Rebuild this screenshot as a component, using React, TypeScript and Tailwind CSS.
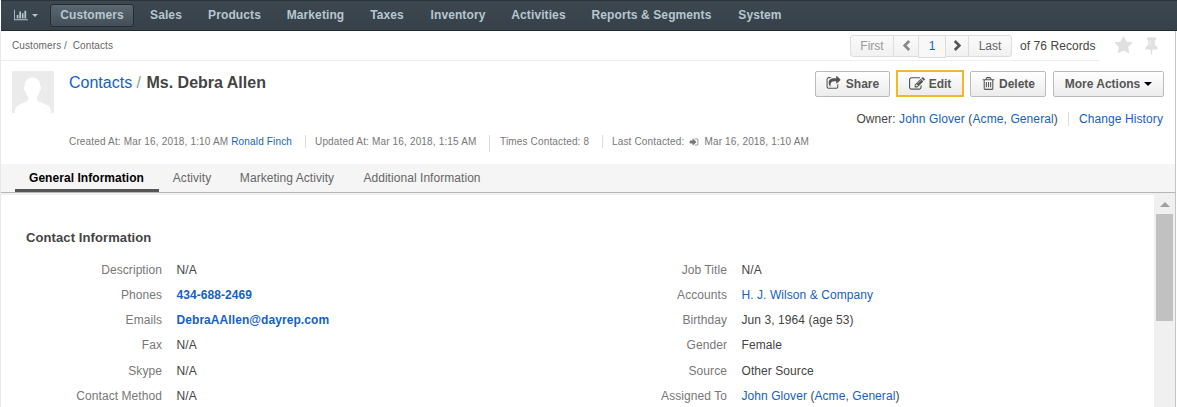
import React from "react";

const ICONS = {
  chart: "M640 896v512h-256v-512h256zm384-512v1024h-256v-1024h256zm1024 1152v128h-2048v-1536h128v1408h1920zm-640-896v768h-256v-768h256zm384-384v1152h-256v-1152h256z",
  star: "M1728 647q0 22-26 48l-363 354 86 500q1 7 1 20 0 21-10.500 35.500t-30.500 14.500q-19 0-40-12l-449-236-449 236q-22 12-40 12-21 0-31.500-14.500t-10.500-35.500q0-6 2-20l86-500-364-354q-25-27-25-48 0-37 56-46l502-73 225-455q19-41 49-41t49 41l225 455 502 73q56 9 56 46z",
  pin: "M800 864v-448q0-14-9-23t-23-9-23 9-9 23v448q0 14 9 23t23 9 23-9 9-23zm672 352q0 26-19 45t-45 19h-429l-51 483q-2 12-10.500 20.500t-20.500 8.500h-1q-27 0-32-27l-76-485h-404q-26 0-45-19t-19-45q0-123 78.500-221.500t177.500-98.500v-512q-52 0-90-38t-38-90 38-90 90-38h640q52 0 90 38t38 90-38 90-90 38v512q99 0 177.500 98.500t78.500 221.500z",
  signIn: "M1312 896q0 26-19 45l-544 544q-19 19-45 19t-45-19-19-45v-288h-448q-26 0-45-19t-19-45v-384q0-26 19-45t45-19h448v-288q0-26 19-45t45-19 45 19l544 544q19 19 19 45zm352-352v704q0 119-84.500 203.500t-203.500 84.500h-320q-13 0-22.500-9.500t-9.500-22.500q0-4-1-20t-.5-26.500 3-23.500 10-19.500 20.500-6.500h320q66 0 113-47t47-113v-704q0-66-47-113t-113-47h-312l-11.500-1-11.500-3-8-5.500-7-9-2-13.500q0-4-1-20t-.5-26.500 3-23.500 10-19.500 20.500-6.500h320q119 0 203.500 84.500t84.500 203.500z",
  edit: "M888 1184l116-116-152-152-116 116v56h96v96h56zm440-720q-16-16-33 1l-350 350q-17 17-1 33t33-1l350-350q17-17 1-33zm80 594v190q0 119-84.500 203.500t-203.500 84.500h-832q-119 0-203.500-84.500t-84.500-203.500v-832q0-119 84.500-203.500t203.500-84.500h832q63 0 117 25 15 7 18 23 3 17-9 29l-49 49q-14 14-32 8-23-6-45-6h-832q-66 0-113 47t-47 113v832q0 66 47 113t113 47h832q66 0 113-47t47-113v-126q0-13 9-22l64-64q15-15 35-7t20 29zm-96-738l288 288-672 672h-288v-288zm444 132l-92 92-288-288 92-92q28-28 68-28t68 28l152 152q28 28 28 68t-28 68z",
  trash: "M704 736v576q0 14-9 23t-23 9h-64q-14 0-23-9t-9-23v-576q0-14 9-23t23-9h64q14 0 23 9t9 23zm256 0v576q0 14-9 23t-23 9h-64q-14 0-23-9t-9-23v-576q0-14 9-23t23-9h64q14 0 23 9t9 23zm256 0v576q0 14-9 23t-23 9h-64q-14 0-23-9t-9-23v-576q0-14 9-23t23-9h64q14 0 23 9t9 23zm128 724v-948h-896v948q0 22 7 40.500t14.500 27 10.500 8.500h832q3 0 10.500-8.500t14.500-27 7-40.500zm-672-1076h448l-48-117q-7-9-17-11h-317q-10 2-17 11zm928 32v64q0 14-9 23t-23 9h-96v948q0 83-47 143.500t-113 60.500h-832q-66 0-113-58.500t-47-141.500v-952h-96q-14 0-23-9t-9-23v-64q0-14 9-23t23-9h309l70-167q15-37 54-63t79-26h320q40 0 79 26t54 63l70 167h309q14 0 23 9t9 23z",
  share: "M1472 989v259q0 119-84.500 203.500t-203.500 84.500h-832q-119 0-203.500-84.500t-84.500-203.500v-832q0-119 84.500-203.500t203.500-84.500h255q13 0 22.500 9.500t9.500 22.500q0 27-26 32-77 26-133 60-10 4-16 4h-112q-66 0-113 47t-47 113v832q0 66 47 113t113 47h832q66 0 113-47t47-113v-214q0-19 18-29 28-13 54-37 16-16 35-8 21 9 21 31zm237-496l-384 384q-18 19-45 19-12 0-25-5-39-17-39-59v-192h-160q-323 0-438 131-119 137-74 473 3 23-20 34-8 2-12 2-16 0-26-13-10-14-21-31t-39.500-68.500-49.500-99.500-38.500-114-17.500-122q0-49 3.500-91t14-90 28-88 47-81.500 68.500-74 94.500-61.500 124.500-48.500 159.500-30.500 196.500-11h160v-192q0-42 39-59 13-5 25-5 26 0 45 19l384 384q19 19 19 45t-19 45z",
};

function Icon({ name, className, box = "0 0 1792 1792" }: { name: keyof typeof ICONS; className: string; box?: string }) {
  return (
    <svg viewBox={box} className={className} fill="currentColor" aria-hidden="true">
      <path d={ICONS[name]} />
    </svg>
  );
}

function Chevron({ flip, className }: { flip?: boolean; className: string }) {
  return (
    <svg viewBox="0 0 10 12" className={className} fill="none" stroke="currentColor" strokeWidth="3" aria-hidden="true">
      <path d={flip ? "M2 1l5 5-5 5" : "M8 1L3 6l5 5"} />
    </svg>
  );
}

const NAV = [
  { label: "Sales", cls: "w-[58px]" },
  { label: "Products", cls: "w-[79px]" },
  { label: "Marketing", cls: "w-[83px]" },
  { label: "Taxes", cls: "w-[60px]" },
  { label: "Inventory", cls: "w-[82px]" },
  { label: "Activities", cls: "w-[79px]" },
  { label: "Reports & Segments", cls: "w-[147px]" },
  { label: "System", cls: "w-[70px]" },
];

const LINK = "text-[#1461c5]";

const LEFT: [string, string, string][] = [
  ["Description", "N/A", ""],
  ["Phones", "434-688-2469", "font-bold text-[#1461c5]"],
  ["Emails", "DebraAAllen@dayrep.com", "font-bold text-[#1461c5]"],
  ["Fax", "N/A", ""],
  ["Skype", "N/A", ""],
  ["Contact Method", "N/A", ""],
];

const RIGHT: [string, React.ReactNode, string][] = [
  ["Job Title", "N/A", ""],
  ["Accounts", "H. J. Wilson & Company", LINK],
  ["Birthday", "Jun 3, 1964 (age 53)", ""],
  ["Gender", "Female", ""],
  ["Source", "Other Source", ""],
  ["Assigned To", <OwnerLink key="owner" />, ""],
];

function OwnerLink() {
  return (
    <>
      <a className={LINK}>John Glover</a> (<a className={LINK}>Acme, General</a>)
    </>
  );
}

function Fields({ rows, label }: { rows: [string, React.ReactNode, string][]; label: string }) {
  return (
    <dl className="flex flex-col tracking-[0.07px]">
      {rows.map(([name, value, cls]) => (
        <div key={name} className="flex h-[25.2px] items-center gap-[14.5px] whitespace-nowrap leading-[18px]">
          <dt className={`${label} text-right text-[#777]`}>{name}</dt>
          <dd className={cls}>{value}</dd>
        </div>
      ))}
    </dl>
  );
}

const BTN =
  "flex items-center justify-center border bg-linear-to-b from-white to-[#ececec] text-[12px] font-bold text-[#555]";
const PLAIN = "h-[26px] rounded-[2px] border-[#bbb]";
const PAGER = "flex h-[22px] items-center justify-center border-[#ddd] bg-linear-to-b from-[#fbfbfb] to-[#f1f1f1]";

export default function App() {
  return (
    <div className="flex h-[407px] w-[1177px] flex-col overflow-hidden bg-white font-['Liberation_Sans',Arial,sans-serif] text-[12px] text-[#444]">
      <header className="ml-px flex h-[31px] shrink-0 items-center border-t border-b border-t-[#2b333b] border-b-[#222b35] bg-linear-to-b from-[#3d474f] to-[#37414a] pb-px pl-[13px] text-[12px] font-bold whitespace-nowrap text-[#b5c7d0]">
        <Icon name="chart" box="0 0 2048 1792" className="h-[12px] w-[14px]" />
        <span className="ml-[4px] h-0 w-0 border-x-[3px] border-t-[3px] border-x-transparent border-t-current" />
        <span className="ml-[12px] flex h-[23px] w-[84px] items-center justify-center rounded-[3px] border border-[#252c33] bg-linear-to-b from-[#5b6671] to-[#444e58] pb-px tracking-[0.1px]">Customers</span>
        <nav className="ml-[3px] flex tracking-[0.1px]">
          {NAV.map((item) => (
            <a key={item.label} className={`${item.cls} text-center`}>{item.label}</a>
          ))}
        </nav>
      </header>

      <div className="flex min-h-0 flex-1 border-l border-[#e8e8e8]">
        <main className="flex w-[1175px] shrink-0 flex-col border-r border-[#c4c4c4]">
          <div className="flex h-[30px] shrink-0 items-start">
            <div className="flex h-[30px] w-[1099px] items-center border-b border-[#eee]">
              <div className="w-[849px] pl-[11px] text-[10px] tracking-[0.1px] text-[#666]">Customers /&nbsp; Contacts</div>
              <div className="flex h-[22px] text-[12px] text-[#666]">
                <span className={`${PAGER} w-[44px] rounded-l-[3px] border text-[#999]`}>First</span>
                <span className={`${PAGER} w-[24px] border-y text-[#888]`}><Chevron className="h-[11px] w-[9px]" /></span>
                <span className={`flex h-[23px] w-[28px] items-center justify-center border border-[#ddd] bg-[#f8f8f8] pb-px ${LINK}`}>1</span>
                <span className={`${PAGER} w-[22px] border-y text-[#555]`}><Chevron flip className="h-[11px] w-[9px]" /></span>
                <span className={`${PAGER} w-[44px] rounded-r-[3px] border`}>Last</span>
              </div>
              <span className="ml-[8px] whitespace-nowrap tracking-[0.07px] text-[#444]">of 76 Records</span>
            </div>
            <div className="flex h-[28px] items-center pl-[14px] text-[#e0e0e0]">
              <Icon name="star" className="h-[19px] w-[19px]" />
              <Icon name="pin" className="ml-[9px] h-[19px] w-[19px]" />
            </div>
          </div>

          <div className="flex h-[69px] shrink-0 justify-between pr-[12px] pl-[11px]">
            <div className="flex pt-[10px]">
              <svg viewBox="0 0 42 42" className="h-[42px] w-[42px]" aria-hidden="true">
                <rect width="42" height="42" rx="1" fill="#ebebeb" />
                <path fill="#fff" d="M20.500 6.500c5 0 8 3.500 7.800 9 1.200.3 1 3.500-.6 4.500-.6 2.800-1.500 4.500-2.700 5.600v3.200c0 2 9 4 12 6.500 1.700 1.500 2 4 2 6.700H3c0-2.700.3-5.200 2-6.700 3-2.500 11-4.500 11-6.500v-3.200c-1.200-1.100-2.100-2.800-2.700-5.600-1.600-1-1.800-4.200-.6-4.500-.2-5.500 2.800-9 7.800-9z" />
              </svg>
              <h1 className="ml-[15px] pt-[1px] text-[16px] leading-[22px] whitespace-nowrap text-[#999]">
                <a className={LINK}>Contacts</a> / <b className="ml-px text-[#444]">Ms. Debra Allen</b>
              </h1>
            </div>
            <div className="flex flex-col items-end pt-[9px]">
              <div className="-mr-px flex h-[27px] items-center">
                <button className={`${BTN} ${PLAIN} w-[75px] gap-[5px]`}><Icon name="share" className="h-[15px] w-[15px]" />Share</button>
                <button className={`${BTN} ml-[6px] h-[27px] w-[68px] gap-[4px] border-2 border-[#f3b924]`}><Icon name="edit" className="mt-px h-[16px] w-[16px]" />Edit</button>
                <button className={`${BTN} ${PLAIN} ml-[6px] w-[76px] gap-[3px]`}><Icon name="trash" className="h-[15px] w-[15px]" />Delete</button>
                <button className={`${BTN} ${PLAIN} ml-[7px] w-[111px] gap-[4px]`}>More Actions<span className="h-0 w-0 border-x-4 border-t-4 border-x-transparent border-t-black" /></button>
              </div>
              <div className="mt-[13px] flex items-center tracking-[0.1px] whitespace-nowrap">
                <span>Owner: <OwnerLink /></span>
                <a className={`ml-[10px] border-l border-[#ddd] pl-[10px] leading-[14px] ${LINK}`}>Change History</a>
              </div>
            </div>
          </div>

          <div className="flex h-[34px] shrink-0 items-start pt-[5px] pl-[68px] text-[10px] leading-[13px] tracking-[0.16px] whitespace-nowrap text-[#777]">
            <span className="w-[236px]">Created At: Mar 16, 2018, 1:10 AM <a className={LINK}>Ronald Finch</a></span>
            <span className="h-[17px] w-[185px] border-x border-[#ddd] border-l-transparent bg-[linear-gradient(#ddd,#ddd)] bg-[length:1px_13px] bg-no-repeat bg-origin-border pl-[9px]">Updated At: Mar 16, 2018, 1:15 AM</span>
            <span className="w-[112px] pl-[10px]">Times Contacted: 8</span>
            <span className="flex items-center border-l border-[#ddd] pl-[9px]">Last Contacted:<Icon name="signIn" className="mr-[5px] ml-[5px] h-[10px] w-[10px]" />Mar 16, 2018, 1:10 AM</span>
          </div>

          <div className="flex h-[29px] shrink-0 border-b border-[#b5b5b5] bg-[#f5f5f5] pl-[14px] tracking-[0.05px] whitespace-nowrap text-[#666]">
            <a className="flex w-[144px] items-center justify-center border-b-[3px] border-[#555] pt-[2px] pr-px font-bold text-black">General Information</a>
            <a className="flex w-[66px] items-center justify-center pb-px">Activity</a>
            <a className="flex w-[124px] items-center justify-center pb-px">Marketing Activity</a>
            <a className="flex w-[146px] items-center justify-center pb-px">Additional Information</a>
          </div>

          <div className="flex min-h-0 flex-1">
            <section className="flex w-[1153px] shrink-0 flex-col border-t-2 border-[#f0f0f0] pt-[34px]">
              <h2 className="pl-[25px] text-[13px] leading-[18px] font-bold tracking-[0.1px]">Contact Information</h2>
              <div className="flex pt-[10.2px]">
                <div className="w-[565px]"><Fields rows={LEFT} label="w-[161px]" /></div>
                <Fields rows={RIGHT} label="w-[161px]" />
              </div>
            </section>
            <div className="flex w-[21px] flex-col items-center bg-[#f0f0f0] pt-[9px]">
              <span className="h-0 w-0 border-x-[5px] border-b-[5px] border-x-transparent border-b-[#a0a0a0]" />
              <span className="mt-[7px] h-[107px] w-[17px] bg-[#c1c1c1]" />
            </div>
          </div>
        </main>
      </div>
    </div>
  );
}
